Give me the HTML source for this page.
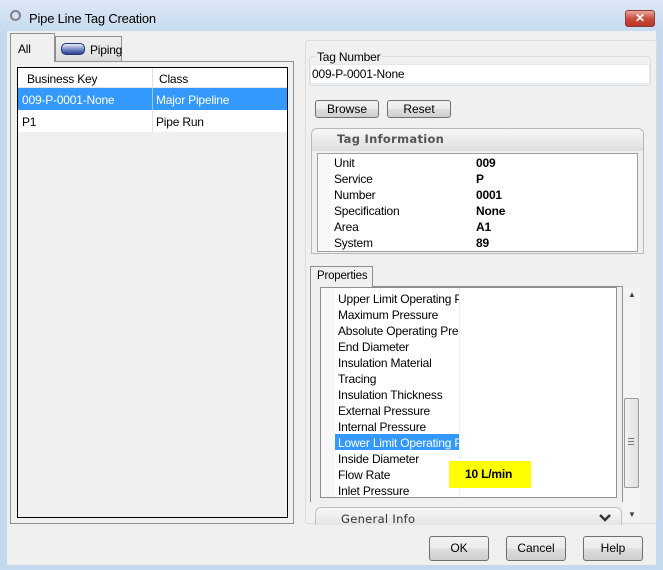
<!DOCTYPE html>
<html><head><style>
*{margin:0;padding:0;box-sizing:border-box}
body{width:663px;height:570px;overflow:hidden;font-family:"Liberation Sans",Arial,sans-serif;font-size:12px;color:#000;background:#c4d8ee}
.a{position:absolute}
.t{position:absolute;white-space:nowrap;font-size:12px;letter-spacing:-0.2px}
.p{position:absolute;white-space:nowrap;font-size:12px;letter-spacing:-0.2px;width:121px;overflow:hidden;left:338px}
.btn{position:absolute;border:1px solid #707070;border-radius:3px;background:linear-gradient(#f2f2f2 0%,#ebebeb 50%,#dddddd 51%,#cfcfcf 100%);text-align:center;font-size:12px}
</style></head><body>
<div class="a" style="left:0;top:0;width:663px;height:31px;background:linear-gradient(#dbe7f5,#c7dbf0)"></div>
<div class="a" style="left:10px;top:10px;width:11px;height:11px;border-radius:50%;border:2px solid #7a8590;background:#dde"></div>
<div class="t" style="left:29px;top:11px;font-size:13px">Pipe Line Tag Creation</div>
<div class="a" style="left:625px;top:10px;width:30px;height:17px;border:1px solid #8a3a30;border-radius:3px;background:linear-gradient(#e9a79a,#c9483a 55%,#b8372a);color:#fff;font-weight:bold;text-align:center;font-size:12px;line-height:15px">✕</div>
<div class="a" style="left:7px;top:31px;width:649px;height:534px;background:#f0f0f0"></div>

<div class="a" style="left:10px;top:61px;width:284px;height:463px;border:1px solid #8e8f8f;background:#f0f0f0"></div>
<div class="a" style="left:10px;top:33px;width:45px;height:29px;border:1px solid #8e8f8f;border-bottom:none;background:#f0f0f0"></div>
<div class="t" style="left:18px;top:42px">All</div>
<div class="a" style="left:55px;top:36px;width:67px;height:25px;border:1px solid #8e8f8f;border-bottom:none;background:linear-gradient(#f0f0f0,#dcdcdc)"></div>
<div class="a" style="left:61px;top:43px;width:24px;height:12px;border:1px solid #223a7a;border-radius:5px;background:linear-gradient(#e8ecf8,#6a7fc0 60%,#2a3f8a)"></div>
<div class="t" style="left:90px;top:43px">Piping</div>
<div class="a" style="left:17px;top:67px;width:271px;height:451px;border:1px solid #000;background:#f0f0f0"></div>
<div class="a" style="left:18px;top:68px;width:269px;height:20px;background:#fff;border-bottom:1px solid #e5e5e5"></div>
<div class="a" style="left:152px;top:68px;width:1px;height:64px;background:#e0e0e0"></div>
<div class="t" style="left:27px;top:72px">Business Key</div>
<div class="t" style="left:159px;top:72px">Class</div>
<div class="a" style="left:18px;top:88px;width:269px;height:22px;background:#3399ff"></div>
<div class="a" style="left:152px;top:88px;width:1px;height:22px;background:#9ac8f8"></div>
<div class="t" style="left:22px;top:93px;color:#fff">009-P-0001-None</div>
<div class="t" style="left:156px;top:93px;color:#fff">Major Pipeline</div>
<div class="a" style="left:18px;top:110px;width:269px;height:22px;background:#fff"></div>
<div class="a" style="left:152px;top:110px;width:1px;height:22px;background:#e0e0e0"></div>
<div class="t" style="left:22px;top:115px">P1</div>
<div class="t" style="left:156px;top:115px">Pipe Run</div>

<div class="a" style="left:305px;top:40px;width:352px;height:484px;border:1px solid #dcdcdc;border-radius:3px"></div>
<div class="a" style="left:309px;top:56px;width:342px;height:30px;border:1px solid #d5dfe5;border-radius:3px"></div>
<div class="t" style="left:315px;top:50px;background:#f0f0f0;padding:0 2px">Tag Number</div>
<div class="a" style="left:310px;top:64px;width:340px;height:20px;background:#fff;border:1px solid #e3e9ef"></div>
<div class="t" style="left:312px;top:67px">009-P-0001-None</div>
<div class="btn" style="left:315px;top:100px;width:64px;height:18px;line-height:16px">Browse</div>
<div class="btn" style="left:387px;top:100px;width:64px;height:18px;line-height:16px">Reset</div>

<div class="a" style="left:311px;top:128px;width:333px;height:126px;border:1px solid #b9b9b9;border-radius:6px 6px 0 0;background:linear-gradient(#f7f7f7,#dedede 22px,#f0f0f0 22px)"></div>
<div class="t" style="left:337px;top:132px;font-weight:bold;color:#555;letter-spacing:0.3px;font-family:'DejaVu Sans',sans-serif;font-size:11.5px">Tag Information</div>
<div class="a" style="left:317px;top:153px;width:321px;height:99px;border:1px solid #a0a0a0;background:#fff">
 <div class="a" style="left:0;top:0;width:12px;height:97px;background:#f7f7f7"></div>
</div>
<div class="t" style="left:334px;top:156px">Unit</div><div class="t" style="left:476px;top:156px;font-weight:bold">009</div>
<div class="t" style="left:334px;top:172px">Service</div><div class="t" style="left:476px;top:172px;font-weight:bold">P</div>
<div class="t" style="left:334px;top:188px">Number</div><div class="t" style="left:476px;top:188px;font-weight:bold">0001</div>
<div class="t" style="left:334px;top:204px">Specification</div><div class="t" style="left:476px;top:204px;font-weight:bold">None</div>
<div class="t" style="left:334px;top:220px">Area</div><div class="t" style="left:476px;top:220px;font-weight:bold">A1</div>
<div class="t" style="left:334px;top:236px">System</div><div class="t" style="left:476px;top:236px;font-weight:bold">89</div>

<div class="a" style="left:310px;top:286px;width:313px;height:216px;border:1px solid #8e8f8f;border-bottom:none"></div>
<div class="a" style="left:310px;top:266px;width:63px;height:21px;border:1px solid #8e8f8f;border-bottom:none;background:#f0f0f0"></div>
<div class="t" style="left:317px;top:270px;font-size:11.5px">Properties</div>
<div class="a" style="left:320px;top:287px;width:297px;height:211px;border:1px solid #8e8f8f;background:#fff;overflow:hidden">
 <div class="a" style="left:0;top:0;width:14px;height:211px;background:#f7f7f7"></div>
 <div class="a" style="left:138px;top:0;width:1px;height:211px;background:#f0f0f0"></div>
</div>
<div class="a" style="left:335px;top:434px;width:124px;height:16px;background:#3399ff"></div>
<div class="a" style="left:449px;top:461px;width:82px;height:27px;background:#ffff00"></div>
<div class="t" style="left:465px;top:467px;font-weight:bold">10 L/min</div>
<div class="p" style="top:292px">Upper Limit Operating P</div>
<div class="p" style="top:308px">Maximum Pressure</div>
<div class="p" style="top:324px">Absolute Operating Pres</div>
<div class="p" style="top:340px">End Diameter</div>
<div class="p" style="top:356px">Insulation Material</div>
<div class="p" style="top:372px">Tracing</div>
<div class="p" style="top:388px">Insulation Thickness</div>
<div class="p" style="top:404px">External Pressure</div>
<div class="p" style="top:420px">Internal Pressure</div>
<div class="p" style="top:436px;color:#fff">Lower Limit Operating P</div>
<div class="p" style="top:452px">Inside Diameter</div>
<div class="p" style="top:468px">Flow Rate</div>
<div class="p" style="top:484px">Inlet Pressure</div>

<div class="a" style="left:315px;top:507px;width:307px;height:18px;border:1px solid #c0c0c0;border-bottom:none;border-radius:6px 6px 0 0;background:linear-gradient(#f8f8f8,#e4e4e4)"></div>
<div class="t" style="left:341px;top:512px;color:#333;font-family:'DejaVu Sans',sans-serif;font-size:11.5px;letter-spacing:0.3px;height:12px;overflow:hidden">General Info</div>
<svg class="a" style="left:599px;top:514px" width="12" height="9"><path d="M1 1 L6 6 L11 1" stroke="#333" stroke-width="2.5" fill="none"/></svg>

<div class="a" style="left:623px;top:287px;width:18px;height:234px;background:#f3f3f3"></div>
<div class="t" style="left:628px;top:290px;font-size:8px;color:#444">▲</div>
<div class="a" style="left:624px;top:398px;width:15px;height:90px;border:1px solid #9a9a9a;border-radius:2px;background:linear-gradient(90deg,#f2f2f2,#e0e0e0)"></div>
<div class="a" style="left:628px;top:438px;width:6px;height:7px;border-top:1px solid #777;border-bottom:1px solid #777"></div>
<div class="a" style="left:628px;top:441px;width:6px;height:1px;background:#777"></div>
<div class="t" style="left:628px;top:510px;font-size:8px;color:#444">▼</div>

<div class="btn" style="left:429px;top:536px;width:60px;height:25px;line-height:23px">OK</div>
<div class="btn" style="left:506px;top:536px;width:60px;height:25px;line-height:23px">Cancel</div>
<div class="btn" style="left:583px;top:536px;width:60px;height:25px;line-height:23px">Help</div>
</body></html>
